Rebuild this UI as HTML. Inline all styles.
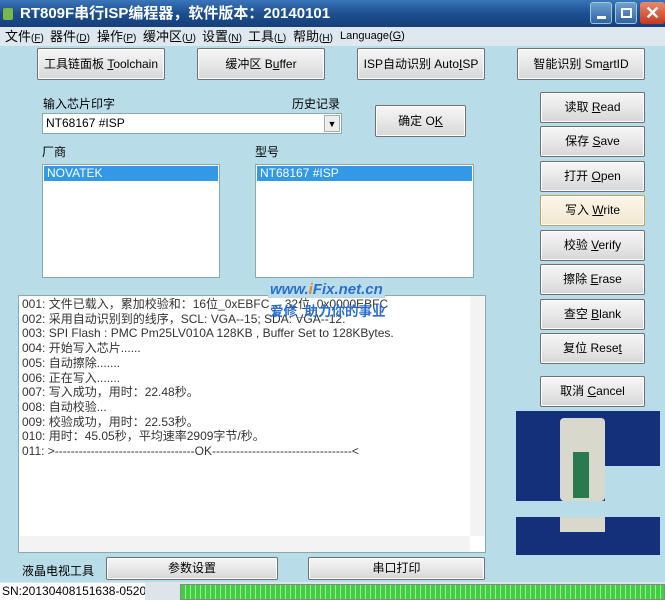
<!DOCTYPE html><html><head><meta charset="utf-8"><style>
*{margin:0;padding:0;box-sizing:border-box}
body{width:665px;height:600px;overflow:hidden;background:#b9dde8;font-family:"Liberation Sans","Noto Sans CJK SC",sans-serif;font-size:12px;color:#000;position:relative}
.a{position:absolute}
.title{left:0;top:0;width:665px;height:27px;background:linear-gradient(#3a75b8,#1c4f90 50%,#163f78);color:#fff;font-weight:bold;font-size:15px;line-height:27px;padding-left:20px}
.menu{left:0;top:27px;width:665px;height:19px;background:#dde8ef;font-size:13px;line-height:19px}
.menu span{position:absolute;top:0;white-space:nowrap}
.menu i{font-style:normal;font-size:10px}
.btn{position:absolute;border:1px solid #707070;border-radius:2px;background:linear-gradient(#f6f6f6,#e8e8e8 50%,#d6d6d6);text-align:center;font-size:12px;box-shadow:inset 0 0 0 1px #fff}
.lb{position:absolute;background:#fff;border:1px solid #8aa;}
.sel{background:#3399e6;color:#fff;height:15px;line-height:15px;padding-left:3px;margin:1px}
.log{left:18px;top:295px;width:468px;height:258px;background:#fff;border:1px solid #8aa;font-size:12px;line-height:14.7px;padding:1px 0 0 3px;color:#333;white-space:pre}
</style></head><body>
<div class="a title">RT809F串行ISP编程器，软件版本：20140101</div>
<div class="a" style="left:3px;top:8px;width:10px;height:12px;background:#7ab84a;border-radius:2px"></div>
<div class="a" style="left:590px;top:2px;width:22px;height:22px;border:1px solid #9cc;background:linear-gradient(#6f9fd0,#2f63a8);border-radius:3px"><div style="margin:13px 0 0 6px;width:9px;height:3px;background:#fff"></div></div>
<div class="a" style="left:615px;top:2px;width:22px;height:22px;border:1px solid #9cc;background:linear-gradient(#6f9fd0,#2f63a8);border-radius:3px"><div style="margin:5px 0 0 5px;width:11px;height:10px;border:2px solid #fff"></div></div>
<div class="a" style="left:640px;top:2px;width:25px;height:22px;background:linear-gradient(#e88a70,#c8381c);border-radius:3px;color:#fff;font-size:18px;line-height:22px;text-align:center;font-weight:bold">✕</div>
<div class="a menu"><span style="left:5px">文件<i>(<u>F</u>)</i></span><span style="left:50px">器件<i>(<u>D</u>)</i></span><span style="left:97px">操作<i>(<u>P</u>)</i></span><span style="left:143px">缓冲区<i>(<u>U</u>)</i></span><span style="left:202px">设置<i>(<u>N</u>)</i></span><span style="left:248px">工具<i>(<u>L</u>)</i></span><span style="left:293px">帮助<i>(<u>H</u>)</i></span><span style="left:340px;font-size:11px">Language(<u>G</u>)</span></div>

<div class="btn" style="left:37px;top:48px;width:128px;height:32px;line-height:30px">工具链面板 <u>T</u>oolchain</div>
<div class="btn" style="left:197px;top:48px;width:128px;height:32px;line-height:30px">缓冲区 B<u>u</u>ffer</div>
<div class="btn" style="left:357px;top:48px;width:128px;height:32px;line-height:30px">ISP自动识别 Auto<u>I</u>SP</div>
<div class="btn" style="left:517px;top:48px;width:128px;height:32px;line-height:30px">智能识别 Sm<u>a</u>rtID</div>

<div class="a" style="left:43px;top:95px">输入芯片印字</div>
<div class="a" style="left:292px;top:95px">历史记录</div>
<div class="a" style="left:42px;top:113px;width:300px;height:21px;background:#fff;border:1px solid #8aa;line-height:19px;padding-left:3px">NT68167 #ISP</div>
<div class="a" style="left:324px;top:115px;width:16px;height:17px;background:#eee;border:1px solid #aaa;font-size:9px;text-align:center;line-height:16px">▼</div>
<div class="btn" style="left:375px;top:105px;width:91px;height:32px;line-height:30px">确定 O<u>K</u></div>

<div class="btn" style="left:540px;top:92px;width:105px;height:31px;line-height:29px">读取 <u>R</u>ead</div>
<div class="btn" style="left:540px;top:126px;width:105px;height:31px;line-height:29px">保存 <u>S</u>ave</div>
<div class="btn" style="left:540px;top:161px;width:105px;height:31px;line-height:29px">打开 <u>O</u>pen</div>
<div class="btn" style="left:540px;top:195px;width:105px;height:31px;line-height:29px;border-color:#c8a060;background:linear-gradient(#fdf6ea,#f2e6d0)">写入 <u>W</u>rite</div>
<div class="btn" style="left:540px;top:230px;width:105px;height:31px;line-height:29px">校验 <u>V</u>erify</div>
<div class="btn" style="left:540px;top:264px;width:105px;height:31px;line-height:29px">擦除 <u>E</u>rase</div>
<div class="btn" style="left:540px;top:299px;width:105px;height:31px;line-height:29px">查空 <u>B</u>lank</div>
<div class="btn" style="left:540px;top:333px;width:105px;height:31px;line-height:29px">复位 Rese<u>t</u></div>
<div class="btn" style="left:540px;top:376px;width:105px;height:31px;line-height:29px">取消 <u>C</u>ancel</div>

<div class="a" style="left:42px;top:143px">厂商</div>
<div class="a" style="left:255px;top:143px">型号</div>
<div class="lb" style="left:42px;top:164px;width:178px;height:114px"><div class="sel">NOVATEK</div></div>
<div class="lb" style="left:255px;top:164px;width:219px;height:114px"><div class="sel">NT68167 #ISP</div></div>

<div class="a log">001: 文件已载入，累加校验和：16位_0xEBFC ，32位_0x0000EBFC
002: 采用自动识别到的线序，SCL: VGA--15; SDA: VGA--12.
003: SPI Flash : PMC Pm25LV010A 128KB , Buffer Set to 128KBytes.
004: 开始写入芯片......
005: 自动擦除.......
006: 正在写入.......
007: 写入成功，用时：22.48秒。
008: 自动校验...
009: 校验成功，用时：22.53秒。
010: 用时：45.05秒，平均速率2909字节/秒。
011: >-----------------------------------OK-----------------------------------<</div>
<div class="a" style="left:470px;top:296px;width:15px;height:240px;background:#f3f3f3"></div>
<div class="a" style="left:19px;top:536px;width:451px;height:16px;background:#f3f3f3"></div>
<div class="a" style="left:268px;top:281px;color:#2a6fd0;font-size:15px;font-style:italic;font-weight:bold;background:#b9dde8;padding:0 2px">www.<span style="color:#f08020">i</span>Fix.net.cn</div>
<div class="a" style="left:270px;top:300px;color:#2a6fd0;font-size:13.5px;font-weight:bold">爱修_助力你的事业</div>

<div class="a" style="left:516px;top:411px;width:144px;height:90px;background:#14307a"></div>
<div class="a" style="left:560px;top:418px;width:45px;height:83px;background:#d8d8cc;border-radius:4px"></div>
<div class="a" style="left:573px;top:452px;width:16px;height:46px;background:#2a7a50"></div>
<div class="a" style="left:605px;top:466px;width:60px;height:40px;background:#b9dde8"></div>
<div class="a" style="left:516px;top:517px;width:144px;height:38px;background:#14307a"></div>
<div class="a" style="left:560px;top:517px;width:45px;height:15px;background:#d8d8cc"></div>

<div class="a" style="left:22px;top:562px">液晶电视工具</div>
<div class="btn" style="left:106px;top:557px;width:172px;height:23px;line-height:21px">参数设置</div>
<div class="btn" style="left:308px;top:557px;width:177px;height:23px;line-height:21px">串口打印</div>

<div class="a" style="left:0;top:582px;width:665px;height:18px;background:#dde4ea"></div>
<div class="a" style="left:0;top:583px;width:145px;height:17px;background:#fff;font-size:12px;line-height:17px;padding-left:2px;overflow:hidden;white-space:nowrap">SN:20130408151638-0520</div>
<div class="a" style="left:180px;top:584px;width:485px;height:16px;border:1px solid #888;background:repeating-linear-gradient(90deg,#3fcf3f 0 4px,#a0e8a0 4px 5px)"></div>
</body></html>
